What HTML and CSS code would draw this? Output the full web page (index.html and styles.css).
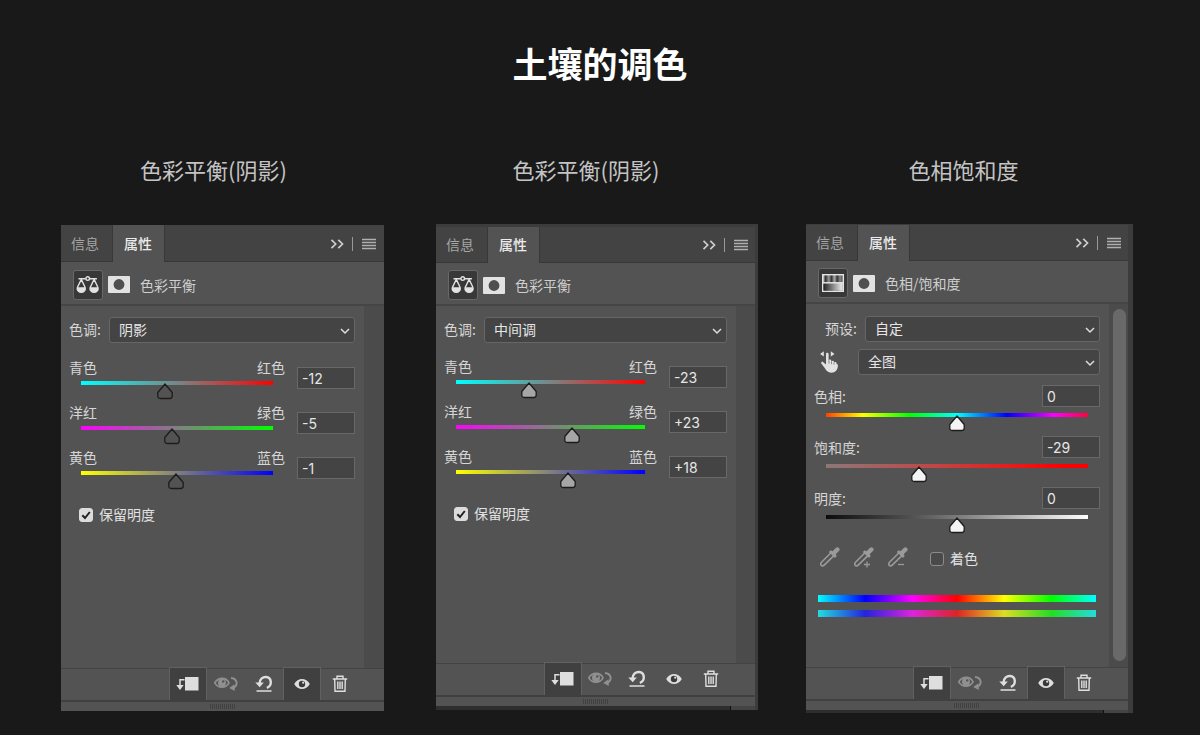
FILE: index.html
```html
<!DOCTYPE html>
<html lang="zh-CN">
<head>
<meta charset="utf-8">
<meta name="viewport" content="width=device-width, initial-scale=1">
<title>土壤的调色</title>
<link rel="stylesheet" href="styles.css">
</head>
<body>
<svg class="sprite" aria-hidden="true">
  <symbol id="i-collapse" viewBox="0 0 14 10"><path d="M1.500 .8 5.700 5 1.500 9.200M8.300.8 12.500 5 8.300 9.200" fill="none" stroke="currentColor" stroke-width="1.700"/></symbol>
  <symbol id="i-menu" viewBox="0 0 14 12"><path d="M0 1.500h14M0 4.500h14M0 7.500h14M0 10.500h14" stroke="currentColor" stroke-width="1.300"/></symbol>
  <symbol id="i-balance" viewBox="0 0 24 18">
    <path d="M2.500 2.800h7.200M13.700 2.800h7.200" stroke="currentColor" stroke-width="1.500"/>
    <circle cx="11.700" cy="2.600" r="1.800" fill="none" stroke="currentColor" stroke-width="1.400"/>
    <path d="M5.300 3.400 2 10.200C0 14 2.500 16.400 5.300 16.400S10.400 14 8.600 10.200zM18.100 3.400l-3.300 6.800c-2 3.800.5 6.200 3.300 6.200s5.100-2.400 3.300-6.200z" fill="none" stroke="currentColor" stroke-width="1.400" stroke-linejoin="round"/>
    <path d="M1.400 11.300H9.200C9.800 14.500 8 16.700 5.300 16.700S.8 14.500 1.400 11.300zM14.200 11.300H22c.6 3.200-1.200 5.400-3.900 5.400s-4.500-2.200-3.900-5.400z" fill="currentColor"/>
  </symbol>
  <symbol id="i-mask" viewBox="0 0 22 17"><rect width="22" height="17" rx="1" fill="#e2e2e2"/><circle cx="11" cy="8.500" r="5.400" fill="#4f4f4f"/></symbol>
  <symbol id="i-hue" viewBox="0 0 22 18">
    <defs>
      <linearGradient id="g-hue"><stop offset="0" stop-color="#222"/><stop offset="1" stop-color="#eee"/></linearGradient>
      <linearGradient id="g-bars"><stop offset="0" stop-color="#ccc"/><stop offset=".14" stop-color="#333"/><stop offset=".3" stop-color="#999"/><stop offset=".42" stop-color="#333"/><stop offset=".58" stop-color="#aaa"/><stop offset=".7" stop-color="#333"/><stop offset=".84" stop-color="#888"/><stop offset="1" stop-color="#444"/></linearGradient>
    </defs>
    <rect x=".7" y=".7" width="20.600" height="16.600" fill="url(#g-bars)" stroke="#e4e4e4" stroke-width="1.400"/>
    <rect x="1.400" y="9" width="19.200" height="7.600" fill="url(#g-hue)"/>
    <path d="M1 8.800h20" stroke="#e4e4e4" stroke-width="1.500"/>
  </symbol>
  <symbol id="i-clip" viewBox="0 0 24 16"><path d="M8.500 3.700H4V10" fill="none" stroke="currentColor" stroke-width="1.500"/><path d="M.3 9h7.400L4 14z" fill="currentColor"/><rect x="9" y="1" width="13.500" height="13.500" fill="currentColor"/></symbol>
  <symbol id="i-previous" viewBox="0 0 24 16"><path d="M.8 6.800C4.300.9 12.200.9 15 6.800 12 12.500 4 12.500.8 6.800z" fill="none" stroke="currentColor" stroke-width="1.700"/><circle cx="8" cy="6.700" r="4" fill="currentColor"/><circle cx="9.200" cy="5.400" r="1.200" fill="#535353"/><path d="M17 2c6 .5 7.500 6.500 3 9.800" fill="none" stroke="currentColor" stroke-width="1.900"/><path d="M15.200 12 20.500 8.200 20.800 15z" fill="currentColor"/></symbol>
  <symbol id="i-reset" viewBox="0 0 18 18"><path d="M4.500 8.500C4.800 3.800 8 1.800 11 2c6 .5 6.500 9 .8 10.800" fill="none" stroke="currentColor" stroke-width="2.400"/><path d="M.3 7.600h8.500L4.700 12.300z" fill="currentColor"/><path d="M1.500 16h15" stroke="currentColor" stroke-width="1.500"/></symbol>
  <symbol id="i-eye" viewBox="0 0 16 12"><path d="M.2 6C4-.8 12-.8 15.800 6 12 12.600 4 12.600.2 6z" fill="currentColor"/><circle cx="8" cy="6" r="3.200" fill="#3a3a3a"/><circle cx="9.200" cy="4.700" r="1.100" fill="currentColor"/></symbol>
  <symbol id="i-trash" viewBox="0 0 16 18"><path d="M.8 4h14.400M5 3.700V1.200h6v2.500M2.700 4.300l.3 12h10l.3-12M5.800 6.500v7.500M8 6.500v7.500M10.200 6.500v7.500" fill="none" stroke="currentColor" stroke-width="1.400"/></symbol>
  <symbol id="i-hand" viewBox="0 0 20 22"><path d="M3.800.3v5.200L.1 2.900zM10.800.3v5.200l3.700-2.600z" fill="currentColor"/><path d="M6 3c0-1.600 2.600-1.600 2.600 0v7c.3-1.900 2.500-1.800 2.700-.2l.2.700c.6-1.300 2.300-1.100 2.500.3l.1.600c.9-.9 2.300-.4 2.500.8 0 .7.100.9.700 1 .5.200.7.600.6 1.500-.2 4-2.300 7-6.700 7-3.300 0-5-2-6.300-4.400L1.300 12.500c-.6-1.400 1-2.200 2-1.200L6 13.600z" fill="currentColor"/><path d="M9 9.500v3.200M11.500 10.400v2.800M14 11.400v2.200" stroke="#535353" stroke-width=".6"/></symbol>
  <symbol id="i-dropper" viewBox="0 0 20 20"><path d="M11 5.700 2 14.800c-1.300 1.300-1.600 2.600-.8 3.500.9.800 2.300.6 3.500-.7L13.900 8.600" fill="none" stroke="currentColor" stroke-width="1.600"/><path d="M8.800 5l2-1.800 1.700 1L16 .8c2-1.800 4.800 1 3.200 3l-3.500 3.500 1 1.800L15 11z" fill="currentColor"/></symbol>
  <symbol id="i-dropper-add" viewBox="0 0 20 22"><use href="#i-dropper" width="20" height="20"/><path d="M10 17.500h6M13 14.500v6" stroke="currentColor" stroke-width="1.300"/></symbol>
  <symbol id="i-dropper-sub" viewBox="0 0 20 22"><use href="#i-dropper" width="20" height="20"/><path d="M10 17.500h6" stroke="currentColor" stroke-width="1.300"/></symbol>
</svg>

<main class="page">
  <h1 class="page-title">土壤的调色</h1>
  <div class="columns">

    <section class="column column-shadow">
      <h2 class="caption">色彩平衡(阴影)</h2>
      <div class="frame">
        <div class="panel">
          <div class="tabs">
            <button class="tab" type="button">信息</button><button class="tab tab-active" type="button">属性</button>
            <div class="tab-tools">
              <button class="plain" type="button" aria-label="折叠"><svg width="14" height="10"><use href="#i-collapse"/></svg></button>
              <span class="divider"></span>
              <button class="plain menu" type="button" aria-label="菜单"><svg width="14" height="12"><use href="#i-menu"/></svg></button>
            </div>
          </div>
          <div class="heading">
            <button class="kind" type="button" aria-label="色彩平衡"><svg width="24" height="18"><use href="#i-balance"/></svg></button>
            <button class="plain" type="button" aria-label="蒙版"><svg width="22" height="17"><use href="#i-mask"/></svg></button>
            <span class="heading-text">色彩平衡</span>
          </div>
          <div class="body">
            <div class="content">
              <div class="field"><label for="tone-a">色调:</label><select id="tone-a" class="select"><option>阴影</option></select></div>
              <div class="sliders">
                <div class="balance-row">
                  <div><div class="ends"><label for="a1">青色</label><span>红色</span></div><input id="a1" class="range cyan-red hollow" type="range" min="-100" max="100" value="-12"></div>
                  <input class="number" type="text" value="-12" aria-label="青色 红色">
                </div>
                <div class="balance-row">
                  <div><div class="ends"><label for="a2">洋红</label><span>绿色</span></div><input id="a2" class="range magenta-green hollow" type="range" min="-100" max="100" value="-5"></div>
                  <input class="number" type="text" value="-5" aria-label="洋红 绿色">
                </div>
                <div class="balance-row">
                  <div><div class="ends"><label for="a3">黄色</label><span>蓝色</span></div><input id="a3" class="range yellow-blue hollow" type="range" min="-100" max="100" value="-1"></div>
                  <input class="number" type="text" value="-1" aria-label="黄色 蓝色">
                </div>
              </div>
              <label class="check keep"><input type="checkbox" checked>保留明度</label>
            </div>
            <div class="gutter"></div>
          </div>
          <div class="actions">
            <button class="action on" type="button" aria-label="剪切到图层"><svg width="24" height="16"><use href="#i-clip"/></svg></button>
            <button class="action dim" type="button" aria-label="查看上一状态"><svg width="24" height="16"><use href="#i-previous"/></svg></button>
            <button class="action" type="button" aria-label="复位"><svg width="18" height="18"><use href="#i-reset"/></svg></button>
            <button class="action on" type="button" aria-label="切换可见性"><svg width="16" height="12"><use href="#i-eye"/></svg></button>
            <button class="action" type="button" aria-label="删除"><svg width="16" height="18"><use href="#i-trash"/></svg></button>
          </div>
          <div class="resize"><span class="grip"></span></div>
        </div>
      </div>
    </section>

    <section class="column column-mid">
      <h2 class="caption">色彩平衡(阴影)</h2>
      <div class="frame">
        <div class="panel">
          <div class="tabs">
            <button class="tab" type="button">信息</button><button class="tab tab-active" type="button">属性</button>
            <div class="tab-tools">
              <button class="plain" type="button" aria-label="折叠"><svg width="14" height="10"><use href="#i-collapse"/></svg></button>
              <span class="divider"></span>
              <button class="plain menu" type="button" aria-label="菜单"><svg width="14" height="12"><use href="#i-menu"/></svg></button>
            </div>
          </div>
          <div class="heading">
            <button class="kind" type="button" aria-label="色彩平衡"><svg width="24" height="18"><use href="#i-balance"/></svg></button>
            <button class="plain" type="button" aria-label="蒙版"><svg width="22" height="17"><use href="#i-mask"/></svg></button>
            <span class="heading-text">色彩平衡</span>
          </div>
          <div class="body">
            <div class="content">
              <div class="field"><label for="tone-b">色调:</label><select id="tone-b" class="select"><option>中间调</option></select></div>
              <div class="sliders">
                <div class="balance-row">
                  <div><div class="ends"><label for="b1">青色</label><span>红色</span></div><input id="b1" class="range cyan-red grey" type="range" min="-100" max="100" value="-23"></div>
                  <input class="number" type="text" value="-23" aria-label="青色 红色">
                </div>
                <div class="balance-row">
                  <div><div class="ends"><label for="b2">洋红</label><span>绿色</span></div><input id="b2" class="range magenta-green grey" type="range" min="-100" max="100" value="23"></div>
                  <input class="number" type="text" value="+23" aria-label="洋红 绿色">
                </div>
                <div class="balance-row">
                  <div><div class="ends"><label for="b3">黄色</label><span>蓝色</span></div><input id="b3" class="range yellow-blue grey" type="range" min="-100" max="100" value="18"></div>
                  <input class="number" type="text" value="+18" aria-label="黄色 蓝色">
                </div>
              </div>
              <label class="check keep"><input type="checkbox" checked>保留明度</label>
            </div>
            <div class="gutter"></div>
          </div>
          <div class="actions">
            <button class="action on" type="button" aria-label="剪切到图层"><svg width="24" height="16"><use href="#i-clip"/></svg></button>
            <button class="action dim" type="button" aria-label="查看上一状态"><svg width="24" height="16"><use href="#i-previous"/></svg></button>
            <button class="action" type="button" aria-label="复位"><svg width="18" height="18"><use href="#i-reset"/></svg></button>
            <button class="action" type="button" aria-label="切换可见性"><svg width="16" height="12"><use href="#i-eye"/></svg></button>
            <button class="action" type="button" aria-label="删除"><svg width="16" height="18"><use href="#i-trash"/></svg></button>
          </div>
          <div class="resize"><span class="grip"></span></div>
        </div>
        <div class="ledge"></div>
      </div>
    </section>

    <section class="column column-hue">
      <h2 class="caption">色相饱和度</h2>
      <div class="frame">
        <div class="panel">
          <div class="tabs">
            <button class="tab" type="button">信息</button><button class="tab tab-active" type="button">属性</button>
            <div class="tab-tools">
              <button class="plain" type="button" aria-label="折叠"><svg width="14" height="10"><use href="#i-collapse"/></svg></button>
              <span class="divider"></span>
              <button class="plain menu" type="button" aria-label="菜单"><svg width="14" height="12"><use href="#i-menu"/></svg></button>
            </div>
          </div>
          <div class="heading">
            <button class="kind" type="button" aria-label="色相/饱和度"><svg width="22" height="18"><use href="#i-hue"/></svg></button>
            <button class="plain" type="button" aria-label="蒙版"><svg width="22" height="17"><use href="#i-mask"/></svg></button>
            <span class="heading-text">色相/饱和度</span>
          </div>
          <div class="body">
            <div class="content">
              <div class="field preset"><label for="preset">预设:</label><select id="preset" class="select"><option>自定</option></select></div>
              <div class="field target"><button class="plain" type="button" aria-label="在图像上调整"><svg width="20" height="22"><use href="#i-hand"/></svg></button><select class="select" aria-label="范围"><option>全图</option></select></div>
              <div class="sliders">
                <div class="hue-row">
                  <div class="hue-head"><label for="c1">色相:</label><input class="number" type="text" value="0" aria-label="色相"></div>
                  <input id="c1" class="range hue white" type="range" min="-180" max="180" value="0">
                </div>
                <div class="hue-row">
                  <div class="hue-head"><label for="c2">饱和度:</label><input class="number" type="text" value="-29" aria-label="饱和度"></div>
                  <input id="c2" class="range saturation white" type="range" min="-100" max="100" value="-29">
                </div>
                <div class="hue-row">
                  <div class="hue-head"><label for="c3">明度:</label><input class="number" type="text" value="0" aria-label="明度"></div>
                  <input id="c3" class="range lightness white" type="range" min="-100" max="100" value="0">
                </div>
              </div>
              <div class="droppers">
                <button class="plain" type="button" aria-label="吸管"><svg width="20" height="22"><use href="#i-dropper" width="20" height="20"/></svg></button>
                <button class="plain" type="button" aria-label="添加到取样"><svg width="20" height="22"><use href="#i-dropper-add"/></svg></button>
                <button class="plain" type="button" aria-label="从取样中减去"><svg width="20" height="22"><use href="#i-dropper-sub"/></svg></button>
                <label class="check"><input type="checkbox">着色</label>
              </div>
              <div class="spectrum"></div>
              <div class="spectrum muted"></div>
            </div>
            <div class="gutter"><div class="scroll-thumb"></div></div>
          </div>
          <div class="actions">
            <button class="action on" type="button" aria-label="剪切到图层"><svg width="24" height="16"><use href="#i-clip"/></svg></button>
            <button class="action dim" type="button" aria-label="查看上一状态"><svg width="24" height="16"><use href="#i-previous"/></svg></button>
            <button class="action" type="button" aria-label="复位"><svg width="18" height="18"><use href="#i-reset"/></svg></button>
            <button class="action on" type="button" aria-label="切换可见性"><svg width="16" height="12"><use href="#i-eye"/></svg></button>
            <button class="action" type="button" aria-label="删除"><svg width="16" height="18"><use href="#i-trash"/></svg></button>
          </div>
          <div class="resize"><span class="grip"></span></div>
        </div>
        <div class="ledge"></div>
      </div>
    </section>

  </div>
</main>
</body>
</html>
```
FILE: styles.css
```css
* { box-sizing: border-box; }

body {
  margin: 0;
  background: #191919;
  color: #d6d6d6;
  font: 14px/20px "Noto Sans CJK SC", sans-serif;
}

button, input, select { font: inherit; color: inherit; margin: 0; }
svg { display: block; }
.sprite { position: absolute; width: 0; height: 0; }

.page { padding: 37px 67px 0 61px; }

.page-title {
  margin: 0 0 64px 6px;
  text-align: center;
  color: #fff;
  font-size: 35px;
  line-height: 52px;
  font-weight: 700;
}

.columns {
  display: grid;
  grid-template-columns: 327fr 322fr 327fr;
  column-gap: 48px;
  align-items: start;
}

.caption {
  margin: 0 0 39px;
  padding-right: 22px;
  text-align: center;
  color: #c4c4c4;
  font-size: 22px;
  line-height: 32px;
  font-weight: 400;
}
.column-shadow .caption { margin-bottom: 40px; }
.column-hue .caption { padding-right: 12px; }

/* Panel frames */
.frame { background: #3c3c3c; }
.column-shadow .frame { margin-right: 4px; }
.column-mid .frame { padding: 3px 3px 0 0; }
.column-hue .frame { padding: 1px 5px 0 0; }

.panel { display: flex; flex-direction: column; background: #535353; }

.ledge {
  height: 4px;
  background: linear-gradient(90deg, #2e2e2e calc(100% - 25px), #0e0e0e calc(100% - 25px), #0e0e0e calc(100% - 24px), #444 calc(100% - 24px));
}
.column-hue .ledge { height: 3px; }

/* Tabs */
.tabs {
  display: flex;
  height: 37px;
  background: #434343;
  box-shadow: inset 0 -1px #383838;
}
.column-mid .tabs, .column-hue .tabs { height: 36px; }

.tab {
  width: 52px;
  padding: 0 0 2px 10px;
  border: 0;
  border-right: 1px solid #383838;
  background: none;
  color: #a6a6a6;
  text-align: left;
}
.tab-active { padding-left: 11px; background: #535353; color: #ececec; font-weight: 500; }

.tab-tools { display: flex; align-items: center; margin-left: auto; padding-right: 8px; color: #cecece; }
.column-mid .tab-tools, .column-hue .tab-tools { padding-right: 7px; padding-bottom: 1px; }
.divider { width: 1px; height: 14px; margin: 0 9px 0 8px; background: #999; }
.plain { padding: 0; border: 0; background: none; }
.menu { color: #b0b0b0; }

/* Heading strip */
.heading {
  display: flex;
  align-items: center;
  height: 44px;
  padding: 3px 0 0 12px;
  border-bottom: 2px solid #454545;
}
.column-mid .heading, .column-hue .heading { height: 43px; }
.kind {
  display: grid;
  place-items: center;
  width: 30px;
  height: 30px;
  margin-right: 5px;
  padding: 0;
  border: 1px solid #686868;
  border-radius: 3px;
  background: #383838;
  color: #e2e2e2;
}
.heading-text { margin-left: 10px; color: #cfcfcf; }

/* Panel body */
.body { display: flex; min-height: 362px; }
.column-mid .body { min-height: 357px; }
.column-hue .body { min-height: 363px; }
.content { flex: 1; min-width: 0; padding: 11px 9px 0 8px; }
.gutter { display: flex; width: 20px; padding: 5px 2px 6px 4px; background: #4b4b4b; }
.column-mid .gutter, .column-hue .gutter { width: 19px; }
.scroll-thumb { flex: 1; border-radius: 7px; background: #696969; }

.field { display: flex; align-items: center; gap: 8px; }
.field label { padding-bottom: 2px; }
.select {
  flex: 1;
  min-width: 0;
  height: 26px;
  padding: 0 24px 2px 9px;
  appearance: none;
  border: 1px solid #666;
  border-radius: 3px;
  background: #444 url("data:image/svg+xml,%3Csvg xmlns='http://www.w3.org/2000/svg' width='10' height='7'%3E%3Cpath d='M1 1l4 4 4-4' fill='none' stroke='%23ddd' stroke-width='1.500'/%3E%3C/svg%3E") no-repeat right 4px top 10px;
  color: #e6e6e6;
}

.sliders { display: grid; gap: 1px; margin-top: 13px; }
.column-shadow .sliders { margin-top: 14px; }
.balance-row { display: grid; grid-template-columns: 1fr 58px; column-gap: 12px; align-items: start; }
.ends { display: flex; justify-content: space-between; margin-bottom: 4px; }

.number {
  width: 58px;
  height: 22px;
  padding: 0 4px;
  border: 1px solid #686868;
  background: #444;
  color: #e6e6e6;
  font-family: Inter, "Noto Sans CJK SC", sans-serif;
}
.balance-row .number { margin-top: 10px; }

/* Range sliders: a thin strip with the pointer hanging below it */
.range {
  display: block;
  width: calc(100% - 8px);
  height: 20px;
  margin: 0 4px;
  appearance: none;
  background: var(--track) no-repeat center top / calc(100% - 16px) 4px;
}
.range::-webkit-slider-runnable-track { height: 20px; }
.range::-webkit-slider-thumb {
  appearance: none;
  width: 16px;
  height: 17px;
  margin-top: 2px;
  border: 0;
  background: var(--thumb) no-repeat center;
}
.cyan-red { --track: linear-gradient(90deg, #00ffff, #7a8585 50%, #ff0000); }
.magenta-green { --track: linear-gradient(90deg, #ff00ff, #808080 50%, #00ff00); }
.yellow-blue { --track: linear-gradient(90deg, #ffff00, #808080 50%, #0000ff); }
.hue { --track: linear-gradient(90deg, #ff4000, #ffff00 14%, #00ff00 32%, #00ffff 50%, #0000ff 69%, #ff00ff 87%, #ff0040); }
.saturation { --track: linear-gradient(90deg, #8c7878, #c24545 42%, #ff0000 90%); }
.lightness { --track: linear-gradient(90deg, #0c0c0c, #505050 32%, #808080 52%, #fff); }
.hollow { --thumb: url("data:image/svg+xml,%3Csvg xmlns='http://www.w3.org/2000/svg' width='16' height='17'%3E%3Cpath d='M8 1 15.200 9.500v3.500q0 2.500-2.500 2.500h-9.400q-2.500 0-2.500-2.500V9.500z' fill='%23535353' stroke='%231c1c1c' stroke-width='1.300' stroke-linejoin='round'/%3E%3C/svg%3E"); }
.grey { --thumb: url("data:image/svg+xml,%3Csvg xmlns='http://www.w3.org/2000/svg' width='16' height='17'%3E%3Cpath d='M8 1 15.200 9.500v3.500q0 2.500-2.500 2.500h-9.400q-2.500 0-2.500-2.500V9.500z' fill='%23a6a6a6' stroke='%231c1c1c' stroke-width='1.300' stroke-linejoin='round'/%3E%3C/svg%3E"); }
.white { --thumb: url("data:image/svg+xml,%3Csvg xmlns='http://www.w3.org/2000/svg' width='16' height='17'%3E%3Cpath d='M8 1 15.200 9.500v3.500q0 2.500-2.500 2.500h-9.400q-2.500 0-2.500-2.500V9.500z' fill='%23f4f4f4' stroke='%231c1c1c' stroke-width='1.300' stroke-linejoin='round'/%3E%3C/svg%3E"); }

.check { display: flex; align-items: center; gap: 6px; color: #e2e2e2; }
.keep { margin: 13px 0 0 10px; }
.check input {
  appearance: none;
  width: 14px;
  height: 14px;
  margin-top: 2px;
  border: 1px solid #8c8c8c;
  border-radius: 3px;
  background: #4a4a4a;
}
.check input:checked {
  border-color: #dcdcdc;
  background: #dcdcdc url("data:image/svg+xml,%3Csvg xmlns='http://www.w3.org/2000/svg' width='12' height='12'%3E%3Cpath d='M2.300 6.200 5 9l4.800-6' fill='none' stroke='%23222' stroke-width='2'/%3E%3C/svg%3E") no-repeat center;
}

/* Hue and saturation panel */
.column-hue .content { padding-top: 12px; }
.preset { padding-left: 11px; }
.target { gap: 18px; margin-top: 7px; padding-left: 6px; color: #e2e2e2; }
.column-hue .sliders { gap: 3px; margin-top: 10px; }
.hue-head { display: flex; justify-content: space-between; align-items: center; margin-bottom: 6px; }
.droppers { display: flex; align-items: center; gap: 14px; height: 22px; margin: 12px 0 26px 6px; color: #9a9a9a; }
.droppers .check { margin-left: 8px; }
.spectrum {
  height: 7px;
  margin: 0 4px 8px;
  background: linear-gradient(90deg, #00ffff, #0000ff 17%, #ff00ff 34%, #ff0000 50%, #ffff00 67%, #00ff00 84%, #00ffff);
}
.muted { background: linear-gradient(90deg, #24dcdc, #2424dc 17%, #dc24dc 34%, #dc2424 50%, #dcdc24 67%, #24dc24 84%, #24dcdc); }

/* Bottom bar */
.actions {
  display: flex;
  justify-content: flex-end;
  gap: 2px;
  height: 32px;
  padding-right: 26px;
  box-shadow: inset 0 1px #434343;
}
.column-mid .actions { gap: 1px; }
.action {
  display: grid;
  place-items: center;
  width: 36px;
  padding: 0;
  border: 0;
  background: none;
  color: #dedede;
}
.on { background: #404040; box-shadow: 0 0 0 1px #616161; }
.dim { color: #909090; }
.resize { display: grid; place-items: center; height: 11px; border-top: 2px solid #404040; }
.grip { width: 26px; height: 5px; background: repeating-linear-gradient(90deg, #414141 0 1px, #535353 1px 2px); }
```
